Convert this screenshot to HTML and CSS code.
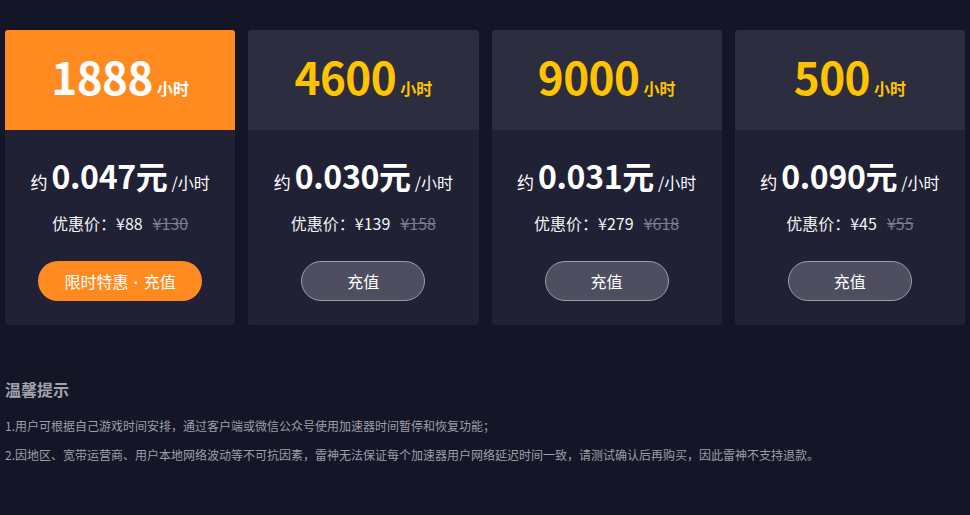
FILE: index.html
```html
<!DOCTYPE html>
<html lang="zh-CN">
<head>
<meta charset="utf-8">
<title>充值</title>
<link rel="stylesheet" href="styles.css">
</head>
<body>
<div class="page">
  <div class="plans">
    <div class="card active">
      <div class="card-top"><span class="hours">1888</span><span class="unit">小时</span></div>
      <div class="card-body">
        <div class="rate"><span class="approx">约</span><span class="rate-num">0.047元</span><span class="per">/小时</span></div>
        <div class="price">优惠价：¥88<s class="old">¥130</s></div>
        <button class="btn btn-promo">限时特惠<span class="dot">·</span>充值</button>
      </div>
    </div>
    <div class="card">
      <div class="card-top"><span class="hours">4600</span><span class="unit">小时</span></div>
      <div class="card-body">
        <div class="rate"><span class="approx">约</span><span class="rate-num">0.030元</span><span class="per">/小时</span></div>
        <div class="price">优惠价：¥139<s class="old">¥158</s></div>
        <button class="btn">充值</button>
      </div>
    </div>
    <div class="card">
      <div class="card-top"><span class="hours">9000</span><span class="unit">小时</span></div>
      <div class="card-body">
        <div class="rate"><span class="approx">约</span><span class="rate-num">0.031元</span><span class="per">/小时</span></div>
        <div class="price">优惠价：¥279<s class="old">¥618</s></div>
        <button class="btn">充值</button>
      </div>
    </div>
    <div class="card">
      <div class="card-top"><span class="hours">500</span><span class="unit">小时</span></div>
      <div class="card-body">
        <div class="rate"><span class="approx">约</span><span class="rate-num">0.090元</span><span class="per">/小时</span></div>
        <div class="price">优惠价：¥45<s class="old">¥55</s></div>
        <button class="btn">充值</button>
      </div>
    </div>
  </div>
  <div class="tips">
    <div class="tips-title">温馨提示</div>
    <p class="tip">1.用户可根据自己游戏时间安排，通过客户端或微信公众号使用加速器时间暂停和恢复功能；</p>
    <p class="tip">2.因地区、宽带运营商、用户本地网络波动等不可抗因素，雷神无法保证每个加速器用户网络延迟时间一致，请测试确认后再购买，因此雷神不支持退款。</p>
  </div>
</div>
</body>
</html>
```
FILE: styles.css
```css
* { box-sizing: border-box; }
html, body {
  margin: 0;
  padding: 0;
  background: #141628;
  font-family: "Noto Sans CJK SC", "Noto Sans", sans-serif;
  color: #fff;
}
.page {
  padding: 30px 5px 0 5px;
  width: 970px;
  height: 515px;
}
.plans {
  display: grid;
  grid-template-columns: repeat(4, 1fr);
  column-gap: 13px;
}
.card {
  background: #202135;
  border-radius: 3px;
  overflow: hidden;
}
.card-top {
  height: 100px;
  background: #2c2d3f;
  display: flex;
  justify-content: center;
  align-items: baseline;
  padding-top: 16px;
  color: #ffc300;
}
.card.active .card-top {
  background: #ff8a1f;
  color: #fff;
}
.hours {
  font-size: 44px;
  font-weight: 700;
  line-height: 60px;
  letter-spacing: -0.5px;
}
.unit {
  font-size: 16px;
  font-weight: 700;
  margin-left: 4px;
}
.card-body {
  display: flex;
  flex-direction: column;
  align-items: center;
  padding: 25px 0 24px;
}
.rate {
  height: 40px;
  line-height: 40px;
  display: flex;
  align-items: baseline;
  white-space: nowrap;
}
.approx {
  font-size: 17px;
  margin-right: 4px;
}
.rate-num {
  font-size: 32px;
  font-weight: 700;
  letter-spacing: -0.3px;
}
.per {
  font-size: 16px;
  margin-left: 4px;
}
.price {
  margin-top: 16px;
  line-height: 24px;
  font-size: 16px;
  color: #f2f2f4;
}
.old {
  color: #7c7d88;
  margin-left: 10px;
}
.btn {
  margin-top: 26px;
  height: 40px;
  width: 124px;
  border-radius: 20px;
  border: 1px solid #9c9ca6;
  background: #4e4e60;
  color: #fff;
  font-family: inherit;
  font-size: 16px;
  padding: 0;
  cursor: pointer;
}
.btn-promo {
  width: 164px;
  border: none;
  background: #ff8a1f;
}
.dot {
  font-family: "Liberation Sans", sans-serif;
  font-weight: 700;
  margin: 0 5px;
}
.tips {
  margin-top: 52px;
  color: #9c9fa9;
}
.tips-title {
  font-size: 16px;
  font-weight: 700;
  line-height: 24px;
  color: #a0a2ac;
}
.tip {
  margin: 16px 0 0;
  font-size: 12px;
  line-height: 18px;
}
.tip + .tip {
  margin-top: 11px;
}
```
